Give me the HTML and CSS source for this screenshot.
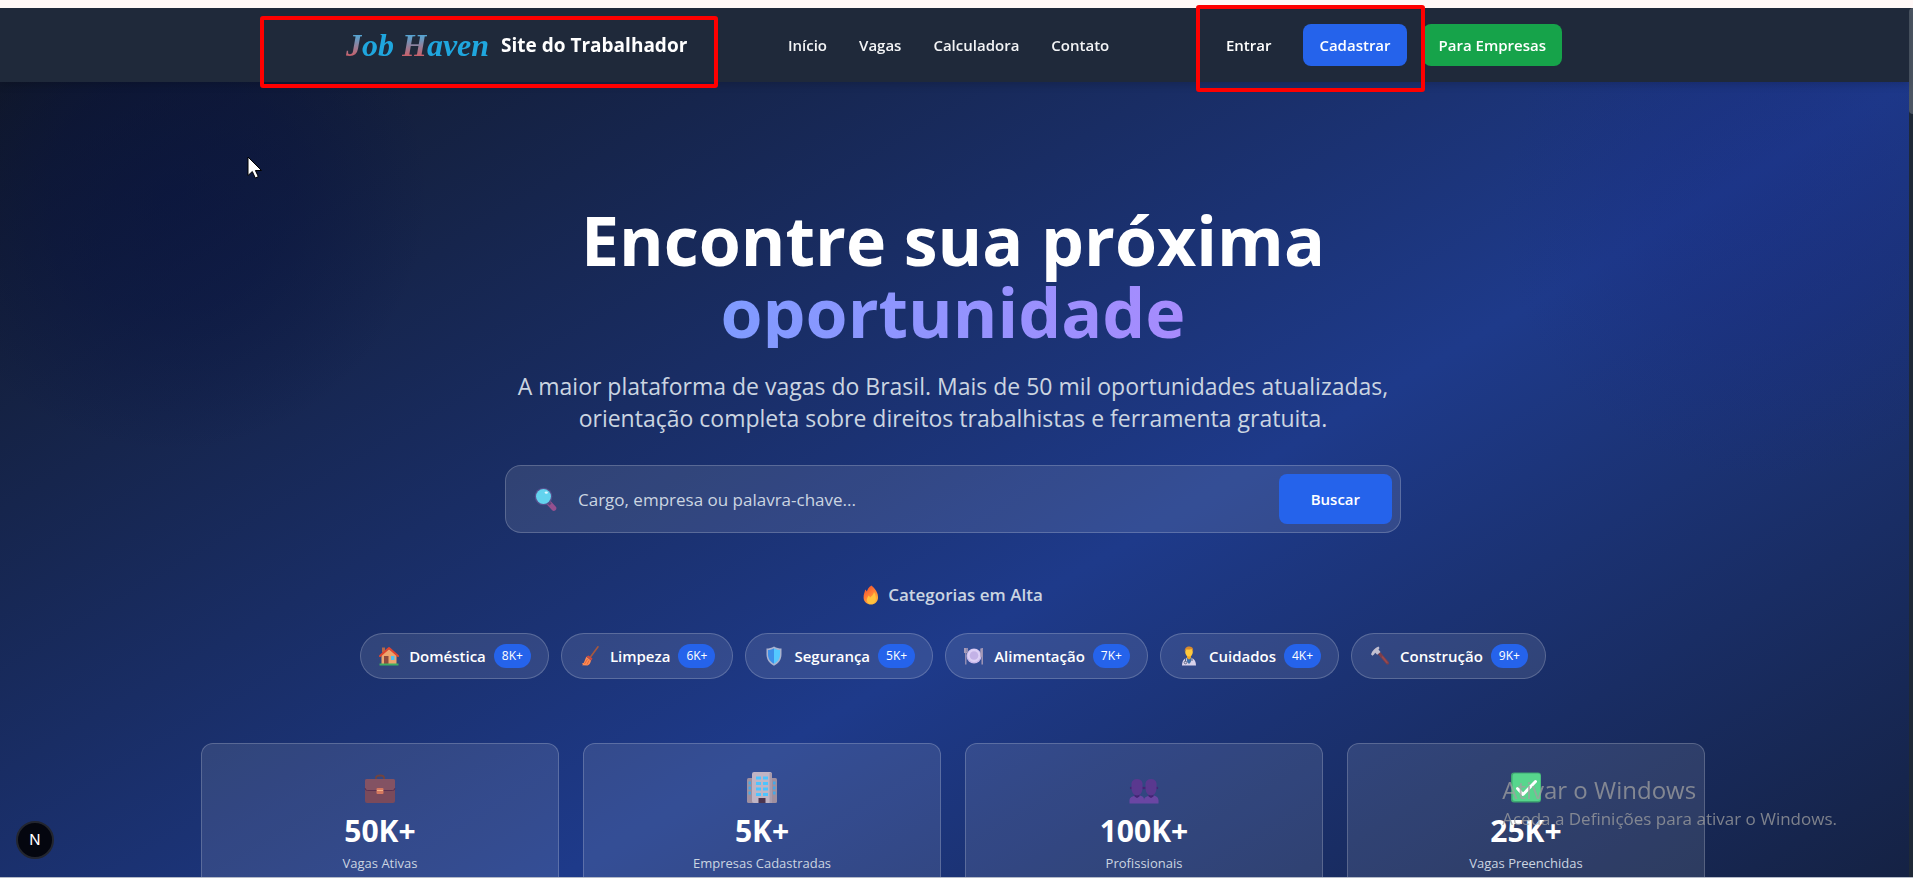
FILE: index.html
```html
<!DOCTYPE html>
<html lang="pt">
<head>
<meta charset="utf-8">
<title>Job Haven - Site do Trabalhador</title>
<link rel="stylesheet" href="styles.css">
</head>
<body>
<div class="frame">
  <header class="topbar">
    <div class="topbar-inner">
      <a class="brand" href="#">
        <span class="logo"><span class="logo-cap">J</span>ob <span class="logo-cap">H</span>aven</span>
        <span class="brand-name">Site do Trabalhador</span>
      </a>
      <nav class="nav">
        <a href="#">Início</a>
        <a href="#">Vagas</a>
        <a href="#">Calculadora</a>
        <a href="#">Contato</a>
      </nav>
      <div class="actions">
        <a class="btn btn-plain" href="#">Entrar</a>
        <a class="btn btn-blue" href="#">Cadastrar</a>
        <a class="btn btn-green" href="#">Para Empresas</a>
      </div>
    </div>
  </header>

  <div class="viewport">
  <main class="hero">
    <h1 class="title">Encontre sua próxima <span class="accent">oportunidade</span></h1>
    <p class="lead">A maior plataforma de vagas do Brasil. Mais de 50 mil oportunidades atualizadas,<br>orientação completa sobre direitos trabalhistas e ferramenta gratuita.</p>

    <form class="search">
      <svg class="search-icon" viewBox="0 0 24 24" aria-hidden="true">
        <path d="M14.5 15.5l5.300 5.800" stroke="#95508f" stroke-width="5" stroke-linecap="round"/>
        <path d="M13.500 14.500l3 3" stroke="#5b4a78" stroke-width="3"/>
        <circle cx="9.500" cy="9.500" r="8.800" fill="#55518f"/>
        <circle cx="9.500" cy="9.500" r="7.500" fill="#63d3ee"/>
        <ellipse cx="12.300" cy="5.600" rx="1.600" ry="1.200" fill="#d8f6ff"/>
      </svg>
      <input class="search-input" type="text" aria-label="Buscar vagas" placeholder="Cargo, empresa ou palavra-chave...">
      <button class="search-btn" type="button">Buscar</button>
    </form>

    <h2 class="trend">
      <svg class="fire" viewBox="0 0 16 20" aria-hidden="true">
        <defs><linearGradient id="fl" x1="0" y1="0" x2="0.600" y2="1"><stop offset="0" stop-color="#e8472f"/><stop offset="0.500" stop-color="#ff7a35"/><stop offset="1" stop-color="#ffb43a"/></linearGradient></defs>
        <path d="M8.500 0.500C12 3.500 15.500 8 15 13c-.4 4-3.200 6.500-7 6.500S.8 17 .6 13C.4 9.500 1.800 7 2.200 4.500c.6.400 1.200 1.200 1.500 2C4.800 4.500 5.500 2 8.500.5z" fill="url(#fl)"/>
        <path d="M11 7c2 3 2.500 6.500 1.300 9-.8 1.800-2.500 3-4.500 3-2.500 0-4-1.800-4-4 0-2 1.200-3 1.800-4.500.8.500 1.300 1.200 1.500 2C9 11 10.500 9.500 11 7z" fill="#ffc23e"/>
      </svg>
      Categorias em Alta
    </h2>

    <div class="chips">
      <button class="chip" type="button">
        <svg class="emoji" viewBox="0 0 20 20" aria-hidden="true">
          <path d="M3 1.500h3v5H3z" fill="#b5674a"/><path d="M2.500 9L10 3l7.500 6v9h-15z" fill="#eda56e"/>
          <path d="M1 10l9-8 9 8" fill="none" stroke="#e0452f" stroke-width="2" stroke-linejoin="round" stroke-linecap="round"/>
          <path d="M5 10h4.500v8H5z" fill="#8b4a3f"/><path d="M12 10h3.500v4H12z" fill="#4cc3f5"/><path d="M0.500 17.500h19v2H.5z" fill="#3fae62"/>
        </svg>
        Doméstica <span class="count">8K+</span>
      </button>
      <button class="chip" type="button">
        <svg class="emoji" viewBox="0 0 20 20" aria-hidden="true">
          <path d="M18 0.800L10.500 11" stroke="#a6583f" stroke-width="1.600" stroke-linecap="round"/>
          <path d="M8.500 9.500l4 3-1.200 2-5-4z" fill="#cf4a3c"/><path d="M6.300 10.800l4.700 3.700c-.5 2.500-1.500 4.500-3.500 5L2 19.300l1-.8-1.200-.7 2-1z" fill="#ff8a52"/>
          <path d="M7.500 13l-3 5M9 14.500L7 18.500" stroke="#d95a37" stroke-width="0.700"/>
        </svg>
        Limpeza <span class="count">6K+</span>
      </button>
      <button class="chip" type="button">
        <svg class="emoji" viewBox="0 0 20 20" aria-hidden="true">
          <path d="M10 0.500c2.500 1.500 5 2 7.500 2v6c0 5-3 9-7.500 11.200C5.500 17.500 2.500 13.500 2.500 8.500v-6c2.500 0 5-.5 7.500-2z" fill="#aab3cf"/>
          <path d="M10 2.200v15.600C6.300 15.800 4 12.500 4 8.500V4c2.200 0 4.200-.6 6-1.800z" fill="#3d8fe8"/><path d="M10 2.200v15.600c3.700-2 6-5.300 6-9.300V4c-2.200 0-4.200-.6-6-1.800z" fill="#54c8ff"/>
        </svg>
        Segurança <span class="count">5K+</span>
      </button>
      <button class="chip" type="button">
        <svg class="emoji" viewBox="0 0 20 20" aria-hidden="true">
          <circle cx="10" cy="10" r="7.500" fill="#c9b9ea"/><circle cx="10" cy="9.500" r="6.500" fill="#ddd0f5"/><circle cx="10" cy="9.500" r="4.300" fill="#c3b2e6"/>
          <path d="M1.800 2v16.500M.6 2v4.500h2.600V2" fill="none" stroke="#a79bb8" stroke-width="1.200"/><path d="M18.200 2v16.500M17 2.500v7.500h1.500" fill="none" stroke="#a79bb8" stroke-width="1.400"/>
        </svg>
        Alimentação <span class="count">7K+</span>
      </button>
      <button class="chip" type="button">
        <svg class="emoji" viewBox="0 0 20 20" aria-hidden="true">
          <path d="M3 19.500c0-5 2.500-8 7-8s7 3 7 8z" fill="#d8d2ea"/><path d="M7.500 11.500h5L11.800 16 10 18l-1.800-2z" fill="#3d6fa8"/>
          <path d="M6.500 12v3.500M13 12v3" stroke="#57617f" stroke-width="1"/><circle cx="6.500" cy="16.500" r="1.300" fill="none" stroke="#57617f" stroke-width="0.900"/>
          <path d="M8 8h4v4l-2 1.500L8 12z" fill="#e8a62a"/><ellipse cx="10" cy="6" rx="3.800" ry="4.500" fill="#ffc93c"/><path d="M5.800 5.500C5.500 2 7.500.3 10.500.4c3 .1 4 2.500 3.600 5.100-.8-1-1-2-1.500-2.500-2 .8-4 .5-5.500.5-.8.500-.8 1.300-1.300 2z" fill="#d98a2b"/>
        </svg>
        Cuidados <span class="count">4K+</span>
      </button>
      <button class="chip" type="button">
        <svg class="emoji" viewBox="0 0 20 20" aria-hidden="true">
          <path d="M8.500 6.500l9 10.500" stroke="#7b3f4c" stroke-width="3.200" stroke-linecap="round"/><path d="M12.500 11l4.500 5.500" stroke="#9b4a4e" stroke-width="1.500" stroke-linecap="round"/>
          <path d="M1 8.200C2.500 4.500 5 2 8.500.6l1 1.400-1 1.500 2 2.500-3.300 2.700-2-2L4 8.500l-1.600 1.300z" fill="#c2bfd0"/>
        </svg>
        Construção <span class="count">9K+</span>
      </button>
    </div>

    <section class="stats">
      <article class="stat">
        <svg class="stat-icon" viewBox="0 0 36 36" aria-hidden="true">
          <path d="M14 8V6.500Q14 4.500 18 4.500t4 2V8" fill="none" stroke="#71443f" stroke-width="1.800"/>
          <rect x="3" y="8" width="30" height="24" rx="2" fill="#7a4a5b"/><path d="M5 8h26a2 2 0 0 1 2 2v6.500q0 2.500-2.500 2.500h-25Q3 19 3 16.500V10a2 2 0 0 1 2-2z" fill="#835263"/>
          <path d="M3 17q0 2.500 2.500 2.500h25q2.500 0 2.500-2.500" fill="none" stroke="#5b3150" stroke-width="1"/><rect x="14.500" y="17" width="7" height="6" rx="1" fill="#d5785f"/><path d="M15 19.500h6" stroke="#f2b184" stroke-width="1"/>
        </svg>
        <strong class="stat-num">50K+</strong><span class="stat-label">Vagas Ativas</span>
      </article>
      <article class="stat">
        <svg class="stat-icon" viewBox="0 0 36 36" aria-hidden="true">
          <rect x="3" y="7" width="30" height="25" rx="1.500" fill="#9f8f9f"/><rect x="8" y="1" width="20" height="31" rx="2" fill="#c0b4c4"/><rect x="25.500" y="2" width="2.500" height="30" fill="#a99bac"/>
          <path d="M12 7h12M12 12.500h12M12 18h12M12 23.500h12" stroke="#4cc4ff" stroke-width="3.200" stroke-dasharray="5 2"/>
          <path d="M4.500 12h2.500M4.500 17h2.500M4.500 22h2.500M29 12h2.500M29 17h2.500M29 22h2.500" stroke="#43a9e8" stroke-width="3"/><path d="M14.500 27h7v5h-7z" fill="#4b3550"/>
        </svg>
        <strong class="stat-num">5K+</strong><span class="stat-label">Empresas Cadastradas</span>
      </article>
      <article class="stat">
        <svg class="stat-icon" viewBox="0 0 36 36" aria-hidden="true">
          <path d="M3.500 32.500v-3.500q0-4 7.500-4.500t7 4.500v3.500z" fill="#6a46a3"/><path d="M18 32.500v-3.500q0-4 7-4.500t7.500 4.500v3.500z" fill="#6a46a3"/>
          <path d="M8.500 22h5v3.500l-2.500 1.500-2.500-1.500zM22.500 22h5v3.500l-2.500 1.500-2.500-1.500z" fill="#432474"/>
          <circle cx="5.200" cy="17" r="1.300" fill="#432474"/><circle cx="17" cy="17" r="1.300" fill="#432474"/><circle cx="19.300" cy="17" r="1.300" fill="#432474"/><circle cx="30.800" cy="17" r="1.300" fill="#432474"/>
          <path d="M5.500 12.500Q6 8 11 8t5.500 4.500V18q-1 6.500-5.500 6.500T5.500 18z" fill="#5a388f"/><path d="M19.500 12.500Q20 8 25 8t5.500 4.500V18q-1 6.500-5.500 6.500T19.500 18z" fill="#5a388f"/>
        </svg>
        <strong class="stat-num">100K+</strong><span class="stat-label">Profissionais</span>
      </article>
      <article class="stat">
        <svg class="stat-icon" viewBox="0 0 36 36" aria-hidden="true">
          <rect x="3" y="1.500" width="30" height="30" rx="3" fill="#3fa872"/><rect x="4.500" y="2.500" width="28" height="27.500" rx="2.500" fill="#57d68d"/>
          <path d="M9.500 17.500l5.500 6 12.500-13" fill="none" stroke="#fff" stroke-width="3" stroke-linecap="round" stroke-linejoin="round"/>
        </svg>
        <strong class="stat-num">25K+</strong><span class="stat-label">Vagas Preenchidas</span>
      </article>
    </section>
  </main>
  </div>
</div>

<div class="scrollbar"><div class="thumb"></div></div>
<button class="dev-badge" type="button" aria-label="Next.js">N</button>
<div class="watermark"><p class="wm-title">Ativar o Windows</p><p class="wm-text">Aceda a Definições para ativar o Windows.</p></div>
<div class="mark mark-brand"></div>
<div class="mark mark-login"></div>
<svg class="cursor" viewBox="0 0 16 24" aria-hidden="true"><path d="M1 1v18.500l4.300-4 3 6.500 3-1.400-2.900-6.100H14.500z" fill="#fff" stroke="#000" stroke-width="1"/></svg>
</body>
</html>
```
FILE: styles.css
```css
* { box-sizing: border-box; }
body {
  margin: 0;
  font-family: "Open Sans", "Noto Sans", sans-serif;
  color: #fff;
  background: #111827;
}
a { color: inherit; text-decoration: none; }
button, input { font: inherit; color: inherit; }

.frame {
  height: 100vh;
  display: flex;
  flex-direction: column;
  padding-right: 4px;
  border-top: 8px solid #fff8f7;
  border-bottom: 1px solid #b4bac8;
  overflow: hidden;
}

/* Header */
.topbar {
  position: relative;
  z-index: 1;
  padding-right: 1px;
  background: #1f293a;
  box-shadow: 0 3px 8px rgba(0, 0, 0, 0.16);
}
.topbar-inner {
  max-width: 1280px;
  margin: 0 auto;
  padding: 16px 32px;
  display: flex;
  align-items: center;
  justify-content: space-between;
}
.brand { display: flex; align-items: center; gap: 12px; }
.logo {
  font: italic bold 32px/42px "Liberation Serif", serif;
  color: #1fa6de;
}
.logo-cap {
  background: linear-gradient(#4fa8d8 20%, #c8606a 80%);
  background-clip: text;
  -webkit-background-clip: text;
  color: transparent;
}
.brand-name { font-size: 19px; font-weight: 700; }
.nav { display: flex; gap: 32px; font-size: 15px; font-weight: 600; color: #f3f4f6; }
.actions { display: flex; gap: 16px; }
.btn {
  padding: 0 16px;
  border-radius: 8px;
  font-size: 15px;
  font-weight: 600;
  line-height: 42px;
}
.btn-blue { background: #2563eb; }
.btn-green { background: #16a34a; }

/* Hero */
.viewport { flex: 1; min-height: 0; overflow: hidden; }
.hero {
  min-height: 128vh;
  padding: 122px 35px 80px 32px;
  display: flex;
  flex-direction: column;
  align-items: center;
  text-align: center;
  background:
    radial-gradient(circle at 170px 110px, rgba(5, 16, 66, 0.48), rgba(5, 16, 66, 0.36) 120px, rgba(5, 16, 66, 0) 260px),
    radial-gradient(circle at calc(100% - 140px) 130px, rgba(24, 40, 130, 0.3), rgba(24, 40, 130, 0.25) 110px, rgba(24, 40, 130, 0) 270px),
    linear-gradient(to bottom right, #111827, #1e3a8a 50%, #111827);
}
.title { margin: 0 0 22px; font-size: 68px; line-height: 72px; font-weight: 700; }
.accent {
  display: block;
  width: fit-content;
  margin: 0 auto;
  background: linear-gradient(to right, #7f9bff, #a78bfd);
  background-clip: text;
  -webkit-background-clip: text;
  color: transparent;
}
.lead { margin: 0 0 31px; font-size: 23px; line-height: 32px; color: #cbd5e1; }

.search {
  width: 100%;
  max-width: 896px;
  display: flex;
  align-items: center;
  padding: 8px 8px 8px 28px;
  background: rgba(255, 255, 255, 0.1);
  border: 1px solid rgba(255, 255, 255, 0.2);
  border-radius: 16px;
}
.search-icon { width: 24px; height: 24px; fill: none; }
.search-input {
  flex: 1;
  min-width: 0;
  padding: 0 20px;
  border: 0;
  outline: 0;
  background: none;
  font-size: 17px;
}
.search-input::placeholder { color: #cbd5e1; opacity: 1; }
.search-btn {
  padding: 0 32px;
  border: 0;
  border-radius: 8px;
  background: #2563eb;
  font-size: 15px;
  line-height: 50px;
  font-weight: 600;
}

.trend {
  margin: 48px 0 24px;
  display: flex;
  align-items: center;
  gap: 9px;
  font-size: 17px;
  line-height: 28px;
  font-weight: 600;
  color: #cbd5e1;
}
.fire { width: 16px; height: 20px; }

.chips { display: flex; flex-wrap: wrap; justify-content: center; gap: 12px; }
.chip {
  display: flex;
  align-items: center;
  gap: 8px;
  padding: 10px 17px 10px 18px;
  border: 1px solid rgba(255, 255, 255, 0.2);
  border-radius: 23px;
  background: rgba(255, 255, 255, 0.1);
  font-size: 15px;
  line-height: 24px;
  font-weight: 600;
}
.emoji { width: 20px; height: 20px; margin-right: 2px; fill: none; }
.count {
  padding: 0 8px;
  border-radius: 12px;
  background: #2563eb;
  font-size: 12px;
  font-weight: 500;
}

.stats {
  width: 100%;
  max-width: 1504px;
  margin-top: 64px;
  display: grid;
  grid-template-columns: repeat(4, 1fr);
  gap: 24px;
}
.stat {
  display: flex;
  flex-direction: column;
  align-items: center;
  padding: 27px 24px 24px;
  border: 1px solid rgba(255, 255, 255, 0.2);
  border-radius: 12px;
  background: rgba(255, 255, 255, 0.1);
}
.stat-icon { width: 36px; height: 36px; }
.stat-num { margin-top: 6px; font-size: 30px; line-height: 36px; }
.stat-label { margin-top: 4px; font-size: 13px; line-height: 20px; color: #cbd5e1; }

/* Overlays above the page */
.scrollbar {
  position: fixed;
  top: 8px;
  right: 0;
  bottom: 1px;
  width: 4px;
  background: #1f2937;
}
.thumb { height: 106px; border-radius: 4px 0 0 4px; background: #4b5563; }
.dev-badge {
  position: fixed;
  left: 16px;
  bottom: 19px;
  width: 38px;
  height: 38px;
  padding: 0;
  border: 2px solid #23262f;
  border-radius: 50%;
  background: #04060f;
  font: 15px/34px Inter, sans-serif;
}
.watermark {
  position: fixed;
  right: 76px;
  bottom: 46px;
  color: rgba(160, 160, 160, 0.75);
}
.wm-title { margin: 0; font-size: 24px; line-height: 32px; }
.wm-text { margin: 0; font-size: 17px; line-height: 26px; }
.mark { position: fixed; z-index: 2; border: 4px solid #f00; border-radius: 3px; }
.mark-brand { left: 260px; top: 16px; width: 458px; height: 72px; }
.mark-login { left: 1196px; top: 5px; width: 229px; height: 87px; }
.cursor { position: fixed; left: 247px; top: 156px; width: 16px; height: 24px; }
```
